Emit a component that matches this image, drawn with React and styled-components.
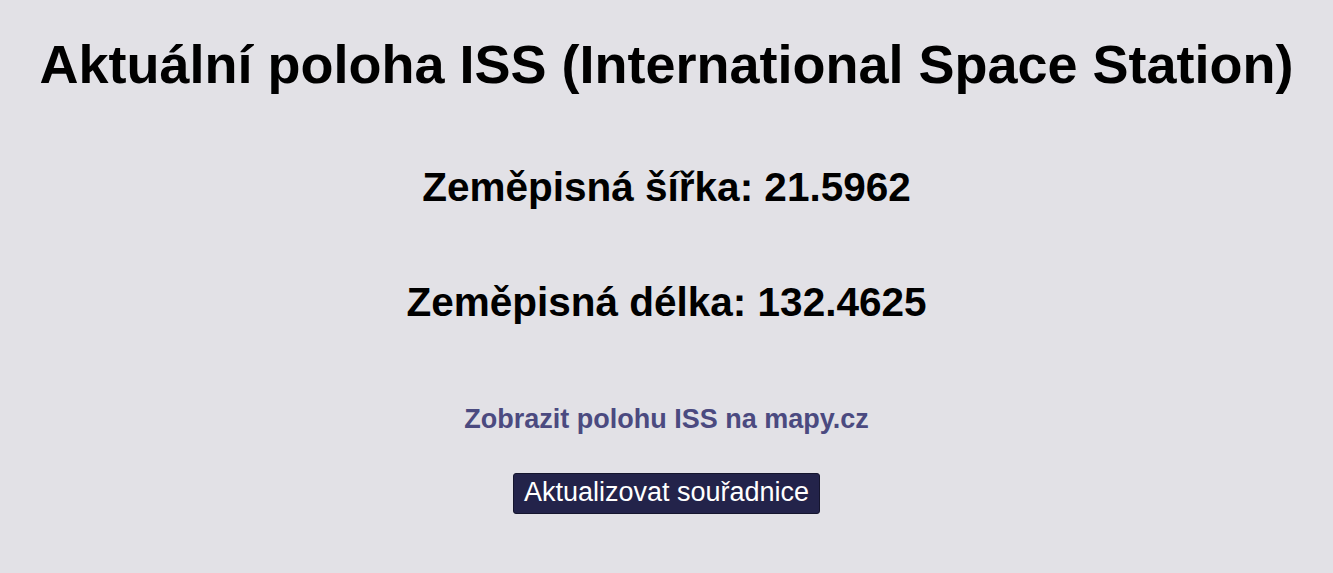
import React from 'react'
import styled, { createGlobalStyle } from 'styled-components'

const GlobalStyle = createGlobalStyle`
  html, body {
    margin: 0;
    padding: 0;
    background-color: #e2e1e6;
    font-family: 'Liberation Sans', Arial, sans-serif;
  }
`

const Page = styled.main`
  display: flex;
  flex-direction: column;
  align-items: center;
  text-align: center;
  padding-top: 33px;
`

const Title = styled.h1`
  margin: 0;
  font-size: 54px;
  font-weight: 700;
  color: #000;
`

const Coord = styled.h2`
  margin: 68.5px 0 0;
  font-size: 40.5px;
  font-weight: 700;
  color: #000;
`

const MapLink = styled.a`
  margin-top: 78px;
  font-size: 27px;
  font-weight: 700;
  color: #4b4a80;
  text-decoration: none;
`

const RefreshButton = styled.button`
  margin-top: 38px;
  padding: 3px 9.5px 5px;
  font-family: 'Liberation Sans', Arial, sans-serif;
  font-size: 27px;
  color: #fff;
  background-color: #23234a;
  border: 1px solid #15152e;
  border-radius: 3px;
  cursor: pointer;
`

const App = () => {
  return (
    <Page>
      <GlobalStyle />
      <Title>Aktuální poloha ISS (International Space Station)</Title>
      <Coord>Zeměpisná šířka: 21.5962</Coord>
      <Coord>Zeměpisná délka: 132.4625</Coord>
      <MapLink href="#">Zobrazit polohu ISS na mapy.cz</MapLink>
      <RefreshButton>Aktualizovat souřadnice</RefreshButton>
    </Page>
  )
}

export default App
